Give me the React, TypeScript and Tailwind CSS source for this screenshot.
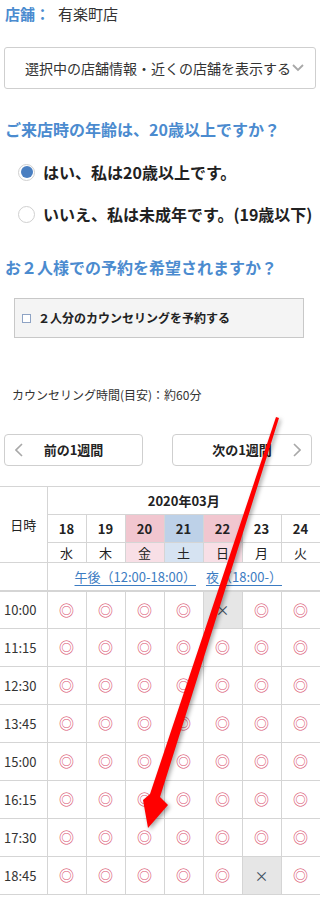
import React from 'react';

const days = [
  { d: '18', w: '水', top: '', bot: '' },
  { d: '19', w: '木', top: '', bot: '' },
  { d: '20', w: '金', top: 'bg-[#f1c6cf]', bot: 'bg-[#f8dfe6]' },
  { d: '21', w: '土', top: 'bg-[#bdd1e8]', bot: 'bg-[#d6e3f2]' },
  { d: '22', w: '日', top: 'bg-[#f1c6cf]', bot: 'bg-[#f8dfe6]' },
  { d: '23', w: '月', top: '', bot: '' },
  { d: '24', w: '火', top: '', bot: '' },
];

// true = 空きあり (◎), false = ×
const slots: { time: string; open: boolean[] }[] = [
  { time: '10:00', open: [true, true, true, true, false, true, true] },
  { time: '11:15', open: [true, true, true, true, true, true, true] },
  { time: '12:30', open: [true, true, true, true, true, true, true] },
  { time: '13:45', open: [true, true, true, true, true, true, true] },
  { time: '15:00', open: [true, true, true, true, true, true, true] },
  { time: '16:15', open: [true, true, true, true, true, true, true] },
  { time: '17:30', open: [true, true, true, true, true, true, true] },
  { time: '18:45', open: [true, true, true, true, true, false, true] },
];

function Chevron({ dir }: { dir: 'left' | 'right' }) {
  return (
    <svg width="8" height="14" viewBox="0 0 8 14" className="shrink-0">
      <polyline
        points={dir === 'left' ? '7,1 1,7 7,13' : '1,1 7,7 1,13'}
        fill="none"
        stroke="#a8a8a8"
        strokeWidth="1.6"
      />
    </svg>
  );
}

function Radio({ checked, label }: { checked?: boolean; label: string }) {
  return (
    <div className="h-[28px] flex items-center pl-[18px] gap-[8px]">
      <span className="w-[17px] h-[17px] rounded-full border border-[#d0d0d0] bg-white flex items-center justify-center shrink-0">
        {checked && <span className="w-[12px] h-[12px] rounded-full bg-[#4a7fc1]" />}
      </span>
      <span className="text-[16px] font-bold text-[#222] whitespace-nowrap">{label}</span>
    </div>
  );
}

export default function App() {
  return (
    <div className="relative w-[320px] bg-white text-[#333] font-['Noto_Sans_CJK_JP',sans-serif] overflow-hidden">
      <div className="h-[28px] flex items-center pl-[5px] text-[15px]">
        <span className="font-bold text-[#4b8bcf]">店舗：</span>
        <span className="ml-[8px] text-[#333]">有楽町店</span>
      </div>

      <div className="mt-[19px] mx-[4px] h-[42px] border border-[#cfcfcf] rounded-[3px] flex items-center pl-[20px] pr-[8px]">
        <span className="text-[14px] text-[#333] whitespace-nowrap">選択中の店舗情報・近くの店舗を表示する</span>
        <svg width="12" height="8" viewBox="0 0 12 8" className="ml-[1px] shrink-0">
          <polyline points="1,1 6,6 11,1" fill="none" stroke="#a8a8a8" strokeWidth="1.8" />
        </svg>
      </div>

      <div className="mt-[27px] h-[26px] flex items-center pl-[5px] text-[16px] font-bold text-[#4b8bcf] whitespace-nowrap">
        ご来店時の年齢は、20歳以上ですか？
      </div>

      <div className="mt-[16px]">
        <Radio checked label="はい、私は20歳以上です。" />
      </div>
      <div className="mt-[14px]">
        <Radio label="いいえ、私は未成年です。(19歳以下)" />
      </div>

      <div className="mt-[26px] h-[26px] flex items-center pl-[5px] text-[16px] font-bold text-[#4b8bcf] whitespace-nowrap">
        お２人様での予約を希望されますか？
      </div>

      <div className="mt-[18px] ml-[14px] w-[290px] h-[40px] border border-[#c8c8c8] bg-[#f4f4f4] flex items-center pl-[7px] gap-[7px]">
        <span className="w-[9px] h-[9px] border border-[#8ea3c4] bg-white shrink-0" />
        <span className="text-[12px] font-semibold text-[#222] whitespace-nowrap">２人分のカウンセリングを予約する</span>
      </div>

      <div className="mt-[47px] h-[20px] flex items-center pl-[12px] text-[12px] text-[#333] whitespace-nowrap">
        カウンセリング時間(目安)：約60分
      </div>

      <div className="mt-[29px] flex px-[4px] gap-[29px]">
        <button className="w-[139px] h-[32px] border border-[#cfcfcf] rounded-[4px] bg-white flex items-center px-[10px]">
          <Chevron dir="left" />
          <span className="flex-1 text-center text-[13px] font-bold text-[#222] pr-[8px]">前の1週間</span>
        </button>
        <button className="w-[140px] h-[32px] border border-[#cfcfcf] rounded-[4px] bg-white flex items-center px-[10px]">
          <span className="flex-1 text-center text-[13px] font-bold text-[#222] pl-[8px]">次の1週間</span>
          <Chevron dir="right" />
        </button>
      </div>

      <table className="mt-[20px] w-[320px] table-fixed border-collapse text-[#333]">
        <colgroup>
          <col className="w-[47px]" />
          {days.map(d => <col key={d.d} className="w-[39px]" />)}
        </colgroup>
        <thead>
          <tr className="h-[28px]">
            <th rowSpan={3} className="border-t border-r border-b border-[#d5d5d5] text-[13px] font-normal text-[#222]">日時</th>
            <th colSpan={7} className="border-t border-b border-[#d5d5d5] text-[13px] font-bold text-[#222]">2020年03月</th>
          </tr>
          <tr className="h-[28px]">
            {days.map(d => (
              <th key={d.d} className={`border border-[#d5d5d5] text-[13px] font-bold text-[#222] ${d.top}`}>{d.d}</th>
            ))}
          </tr>
          <tr className="h-[20px]">
            {days.map(d => (
              <th key={d.d} className={`border border-[#d5d5d5] text-[13px] font-normal text-[#222] leading-none ${d.bot}`}>{d.w}</th>
            ))}
          </tr>
          <tr className="h-[28px]">
            <th className="border-r border-b-2 border-[#d5d5d5]" />
            <th colSpan={7} className="border-b-2 border-[#d5d5d5] text-[13px] font-normal text-left whitespace-nowrap">
              <span className="ml-[27px] text-[#3c7cc2] underline underline-offset-[3px]">午後（12:00-18:00）</span>
              <span className="ml-[10px] text-[#3c7cc2] underline underline-offset-[3px]">夜（18:00-）</span>
            </th>
          </tr>
        </thead>
        <tbody>
          {slots.map(s => (
            <tr key={s.time} className="h-[38px]">
              <td className="border-r border-b border-[#d5d5d5] text-[13px] text-[#333] pl-[4px]">{s.time}</td>
              {s.open.map((o, i) => (
                <td
                  key={i}
                  className={`border border-[#d5d5d5] text-center ${o ? 'text-[15px] text-[#d9506e]' : 'text-[14px] text-[#3d4d60] bg-[#e6e6e6]'}`}
                >
                  {o ? '◎' : '×'}
                </td>
              ))}
            </tr>
          ))}
        </tbody>
      </table>

      {/* annotation arrow drawn over the page */}
      <svg
        className="absolute left-0 top-0 pointer-events-none"
        width="320"
        height="898"
        viewBox="0 0 320 898"
        style={{ filter: 'drop-shadow(2px 2px 2px rgba(0,0,0,0.35))' }}
      >
        <polygon
          points="276,417 279,418 160,797 168,805 148,828 143,800 150,794"
          fill="#ff0000"
        />
      </svg>
    </div>
  );
}
